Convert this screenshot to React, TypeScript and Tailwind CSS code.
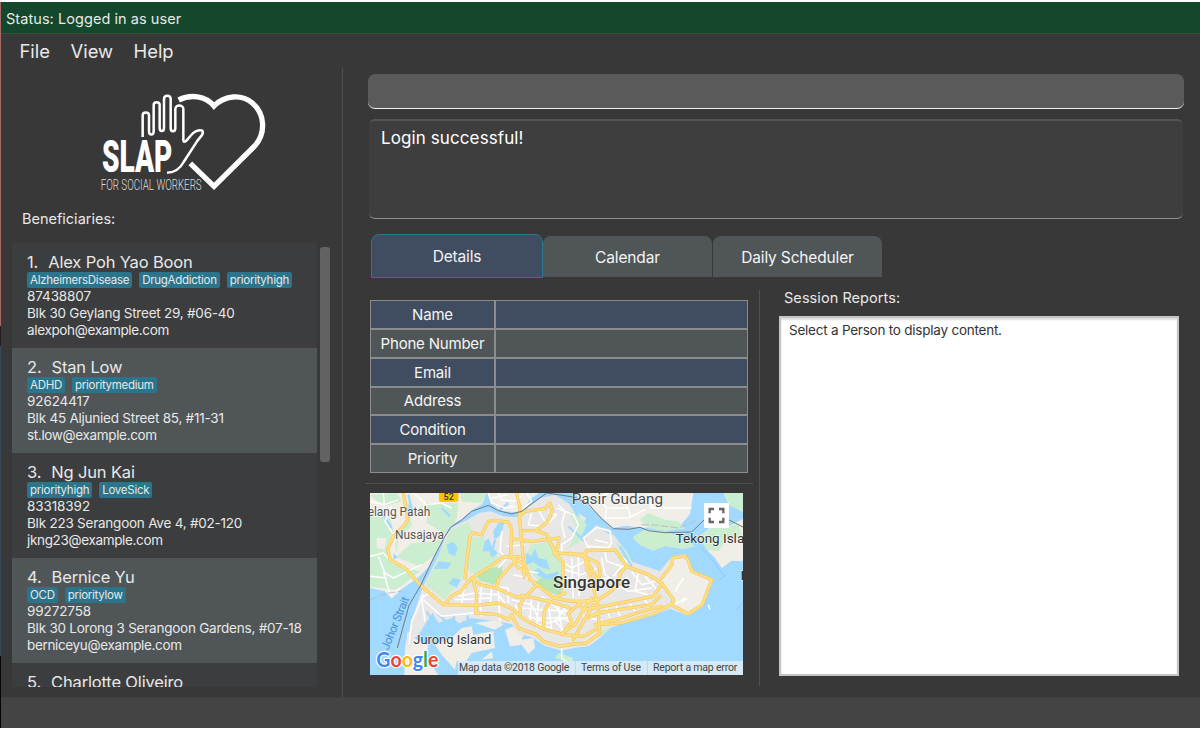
import React from "react";

type Person = { id: number; name: string; tags: string[]; phone: string; address: string; email: string };

const people: Person[] = [
  { id: 1, name: "Alex Poh Yao Boon", tags: ["AlzheimersDisease", "DrugAddiction", "priorityhigh"], phone: "87438807", address: "Blk 30 Geylang Street 29, #06-40", email: "alexpoh@example.com" },
  { id: 2, name: "Stan Low", tags: ["ADHD", "prioritymedium"], phone: "92624417", address: "Blk 45 Aljunied Street 85, #11-31", email: "st.low@example.com" },
  { id: 3, name: "Ng Jun Kai", tags: ["priorityhigh", "LoveSick"], phone: "83318392", address: "Blk 223 Serangoon Ave 4, #02-120", email: "jkng23@example.com" },
  { id: 4, name: "Bernice Yu", tags: ["OCD", "prioritylow"], phone: "99272758", address: "Blk 30 Lorong 3 Serangoon Gardens, #07-18", email: "berniceyu@example.com" },
  { id: 5, name: "Charlotte Oliveiro", tags: [], phone: "", address: "", email: "" },
];

const fields = ["Name", "Phone Number", "Email", "Address", "Condition", "Priority"];

function Logo() {
  return (
    <svg className="ml-[90px] mt-[17px] block h-[115px] w-[190px]" viewBox="0 0 570 345" fill="none" stroke="#fff">
      <path d="M266 45C302 27 346 32 372 63C404 30 455 27 487 54C527 88 527 146 494 183L372 304L301 235" strokeWidth="16" />
      <path
        d="M158 156V91C158 80 177 80 177 91V139C177 152 191 152 191 139V60C191 49 209 49 209 60V129C209 141 222 141 222 129V42C222 29 242 29 242 42V129C242 142 256 142 256 129V72C256 58 280 58 280 72V166C282 178 292 164 301 153C311 140 326 133 337 137C344 146 331 155 321 169L281 231C268 255 252 263 231 263"
        strokeWidth="7.5"
      />
      <g fill="#fff" stroke="none">
        <text x="36" y="262" fontFamily="Roboto, sans-serif" fontWeight="900" fontSize="134" textLength="211" lengthAdjust="spacingAndGlyphs">SLAP</text>
        <text x="32" y="314" fontFamily="Roboto, sans-serif" fontWeight="300" fontSize="46" textLength="303" lengthAdjust="spacingAndGlyphs" fill="#dedede">FOR SOCIAL WORKERS</text>
      </g>
    </svg>
  );
}

const highways = [
  "M115 15L122 55L128 95L118 112L85 145L68 185L76 216L120 240L165 290L235 350L330 352L400 345L440 362L480 395L540 425L600 440L655 445L700 420",
  "M240 348L262 322L285 312L318 272L370 240L415 207L475 205",
  "M300 272L305 220L315 145L322 135L350 140L370 100L385 97L430 102L440 125L437 200L455 235L480 250",
  "M455 15L465 60L463 85L475 215L495 275L530 300L565 330L620 340L675 340",
  "M463 85L480 70L540 62L555 45L562 70L545 105L515 125",
  "M440 152L500 160L582 150L578 178L568 198",
  "M475 128L515 128L545 140L570 195L660 200L665 188L750 186L785 235L850 260L890 285L925 335",
  "M320 270L345 290L395 300L455 328L482 325L515 292",
  "M470 322L555 340L615 360M440 210L475 225L478 268",
  "M440 230L400 275L395 300M325 280L335 320L333 375",
  "M333 375L400 380L430 395L440 380",
  "M440 380L460 420L515 440L535 460L585 475L625 468L665 465L705 435L700 410L770 405L870 375L920 348L925 335",
  "M890 270L920 232L922 210L955 204L968 214L980 250L1040 275L1012 350L970 378L922 352",
  "M660 195L665 240L680 275L690 320L700 355L702 420",
  "M785 235L765 255L765 285L735 312L700 335L650 342L610 375L620 400L590 440",
  "M480 325L465 350L465 385M555 340L538 370L535 420M565 330L600 315",
  "M570 195L595 225L592 300M615 195L655 205L700 225L705 260L690 290M655 200L700 280",
  "M640 345L655 365L700 358L780 342L865 325L890 290M670 390L700 375L760 365L860 350L885 325",
  "M600 430L630 410L660 360L680 330M625 455L650 410L685 350M690 410L770 390L830 370L890 355",
];

const streets = [
  "M15 205L55 195L85 225M40 205L60 255L85 270L170 230M55 250L75 320L105 300M15 265L65 270M145 15L180 45L165 90",
  "M15 40L60 50L100 35M55 15L58 55M180 50L230 45L260 60M80 55L60 100L85 140",
  "M370 15L380 45L420 60L450 55M400 15L410 35L445 40L470 25M485 15L500 40L470 65M380 30L430 20",
  "M175 320L140 400L132 470M175 335L230 385L325 375M180 400L170 330L200 310",
  "M280 325L330 315L400 320L420 345M300 290L290 345M350 290L345 345L350 385M380 300L375 350M400 310L405 400M270 335L380 330",
  "M410 130L405 190L425 210L400 240M425 175L480 170M440 215L465 245L520 255M445 260L490 270",
  "M500 75L490 110L530 115M520 65L545 110L575 80L550 75M580 50L600 70L590 110L600 150M575 60L625 80L640 110L620 150L590 170L590 200",
  "M670 180L655 150L695 118L735 130L740 165L720 190M690 155L730 165M670 175L740 180",
  "M590 220L620 240L660 220M600 245L650 260L700 240M600 270L660 280L730 270M620 210L625 330M640 200L642 325M710 210L720 260L750 280L790 270",
  "M720 190L725 220L770 235L745 265M765 205L785 220L770 245M800 250L830 290L870 280M820 255L810 310L850 320M840 265L880 310M755 290L790 310L860 300",
  "M440 335L500 350L520 390L600 390L620 410M500 330L495 400M520 340L515 420M550 345L560 425M580 350L590 430M470 360L530 365L610 370M490 385L550 405L620 385",
  "M530 325L600 380M450 350L480 400L560 420M605 355L570 400L600 430M645 350L660 390L710 395M720 350L735 390M750 345L765 385M790 340L810 370M835 330L850 350",
  "M930 310L955 270M965 330L950 345M930 350L960 330M1030 350L1035 365M380 295L430 300L430 345",
  "M700 30L725 60L720 90L790 90L840 65M730 60L790 60L795 85M760 30L790 60M850 20L860 60L980 60M710 25L730 15M590 475L590 510L610 525",
];

function SingaporeMap() {
  return (
    <svg className="block h-[182px] w-[373px]" viewBox="15 15 1119 546" preserveAspectRatio="none">
      <rect x="15" y="15" width="1119" height="546" fill="#a2daff" />
      <g fill="#f1ede7">
        <path d="M15 15H364L352 48L318 68L290 94L258 112L239 142L224 172L207 205L187 241L158 270L110 304L80 332L60 310L15 300Z" />
        <path d="M366 15H522L494 35L475 66L450 73L405 68L378 45Z" />
        <path d="M625 15L666 48L710 90L740 120L785 113L826 120L880 118L940 120L975 78L985 15Z" />
        <path d="M1010 140L1045 110L1080 120L1134 93V220L1100 218L1070 240L1050 210L1030 190Z" />
        <path d="M1075 15H1134V72L1090 50Z" fill="#c9eed2" />
        <path d="M128 430L150 452L190 472L185 510L220 561H118L120 485Z" />
        <path d="M210 470L260 450L290 420L320 415L325 440L385 430L390 480L320 495L300 525L275 520L270 545L230 500Z" />
        <path d="M420 425L460 410L480 430L470 455L505 450L510 480L490 498L470 470L435 475ZM330 405L400 395L415 410L390 425ZM350 515L380 490L385 510Z" />
      </g>
      <path
        d="M172 300L195 255L226 190L242 143L262 118L302 98L345 74L378 70L415 85L463 88L490 58L527 30L570 20L613 48L637 74L664 90L648 120L647 160L674 132L694 112L735 125L760 160L785 190L802 222L850 238L885 250L922 204L960 198L985 248L1045 278L1014 355L971 384L915 362L859 384L780 404L735 420L705 450L672 474L625 480L590 488L540 474L500 448L462 438L440 408L385 398L318 390L282 406L262 390L220 404L202 374L181 407L162 437L145 455L135 485L124 462L145 385Z"
        fill="#e9e7e6"
      />
      <path d="M888 270L922 210L958 204L980 250L1040 278L1012 350L972 378L922 348Z" fill="#f1ede7" />
      <g fill="#cbedd0">
        <path d="M130 85L185 45L280 45L275 95L235 145L210 200L165 235L100 210L90 170L100 140ZM15 85L75 90L85 130L65 175L85 228L165 250L95 305L15 296Z" />
        <path d="M182 290L230 185L255 130L310 102L325 140L300 200L295 265L240 335Z" />
        <path d="M320 150L355 145L380 190L400 210L375 240L335 260L305 245Z" />
        <path d="M500 170L560 160L590 205L600 260L590 320L555 310L520 275L495 250L480 205Z" />
        <path d="M825 95L850 75L900 95L940 100L960 122L900 128L850 120Z" />
        <path d="M802 148L840 124L900 130L950 148L990 175L955 184L900 175L865 188L825 172Z" />
        <path d="M1000 145L1050 112L1120 110L1134 150L1090 150L1060 190L1025 185Z" />
        <path d="M610 65L640 80L665 110L640 165L610 180L635 125ZM750 160L785 190L800 220L770 205ZM700 430L740 418L703 450ZM580 495L625 510L620 525L570 510Z" />
        <path d="M285 15L365 15L350 45L290 40ZM15 20L95 15L110 40L55 55Z" />
      </g>
      <g fill="#f1ede7">
        <path d="M130 60L190 70L185 105L230 130L215 160L140 165L95 205L100 150L140 115ZM35 150L65 150L60 185L35 180Z" />
      </g>
      <g fill="#b8e6b4">
        <path d="M335 265L375 240L412 235L410 265L388 290L345 278Z" />
        <path d="M500 290L540 262L585 270L595 320L565 318L530 298Z" />
      </g>
      <g fill="#a2daff">
        <path d="M245 170L265 162L278 180L270 205L250 195ZM205 243L222 220L260 225L248 242ZM360 160L370 150L380 175L398 195L385 208L372 190L352 190ZM385 130L400 105L418 105L408 140L388 155Z" />
        <path d="M482 195L500 205L510 180L520 210L545 215L555 245L525 238L505 222L484 232ZM505 250L520 240L545 260L580 250L580 270L545 275L518 262Z" />
        <path d="M265 270L288 275L275 300L250 285ZM130 45L145 65L130 95ZM85 195L100 208L85 215Z" />
      </g>
      <g stroke="#a2daff" strokeWidth="7" fill="none">
        <path d="M185 370L205 405M218 377L245 403M267 380V407M307 382L310 405M130 20L140 60M255 85L230 60M390 155L378 205M640 85L615 45M610 115L660 160M742 140L700 115M765 175L800 235M55 80L80 120M400 70L430 45" />
      </g>
      <g fill="none" stroke="#fff" strokeWidth="4.5" strokeLinejoin="round">
        {streets.map((d) => <path key={d} d={d} />)}
      </g>
      <g fill="none" stroke="#f4c95f" strokeWidth="10" strokeLinejoin="round" strokeLinecap="round">
        {highways.map((d) => <path key={d} d={d} />)}
      </g>
      <g fill="none" stroke="#ffe085" strokeWidth="6" strokeLinejoin="round" strokeLinecap="round">
        {highways.map((d) => <path key={d} d={d} />)}
      </g>
      <g fill="none" stroke="#737980" strokeWidth="3">
        <path d="M97 480L112 425L132 352L168 290L208 205L240 145L257 118L290 96L320 70L370 52L400 68L440 78L470 70L510 40L545 15" />
        <path d="M545 15L580 20L630 28L670 48L710 92L745 122L790 124L825 118L850 128L900 134L980 132L1018 95M1090 95L1134 117" />
      </g>
      <path d="M830 110L880 112L940 120L1000 95M15 335L60 318L110 308" fill="none" stroke="#b9bec3" strokeWidth="3" strokeDasharray="22 7" />
      <path d="M1010 180L1045 220L1080 265L1062 275M1112 365L1134 345" fill="none" stroke="#85c0f4" strokeWidth="2" />
      <path d="M222 10H280V34Q280 42 272 42H230Q222 42 222 34Z" fill="#f7c600" />
      <text x="251" y="35" textAnchor="middle" fontFamily="Roboto, sans-serif" fontWeight="500" fontSize="27" fill="#333">52</text>
      <g fontFamily="Roboto, sans-serif" fill="#4b4b4b" stroke="#fff" strokeOpacity="0.7" strokeWidth="4" strokeLinejoin="round" paintOrder="stroke">
        <text x="8" y="84" fontSize="37" textLength="188" lengthAdjust="spacingAndGlyphs" fill="#555">elang Patah</text>
        <text x="90" y="153" fontSize="36" textLength="147" lengthAdjust="spacingAndGlyphs" fill="#555">Nusajaya</text>
        <text x="620" y="47" fontSize="45" textLength="274" lengthAdjust="spacingAndGlyphs">Pasir Gudang</text>
        <text x="932" y="166" fontSize="39" textLength="228" lengthAdjust="spacingAndGlyphs" fill="#333">Tekong Islan</text>
        <text x="145" y="469" fontSize="40" textLength="234" lengthAdjust="spacingAndGlyphs" fill="#333">Jurong Island</text>
        <text x="564" y="299" fontSize="50" fontWeight="500" textLength="231" lengthAdjust="spacingAndGlyphs" fill="#333">Singapore</text>
        <text x="1127" y="275" fontSize="39" fontWeight="700" fill="#333">P</text>
      </g>
      <text transform="translate(70 488) rotate(-68)" fontFamily="Roboto, sans-serif" fontSize="35" textLength="168" fill="#4f92da">Johor Strait</text>
      <g fontFamily="Lato, sans-serif" fontWeight="700" fontSize="60" stroke="#fff" strokeWidth="7" paintOrder="stroke" strokeLinejoin="round">
        <text x="34" y="537" textLength="186" lengthAdjust="spacingAndGlyphs">
          <tspan fill="#4285f4">G</tspan><tspan fill="#ea4335">o</tspan><tspan fill="#fbbc05">o</tspan><tspan fill="#4285f4">g</tspan><tspan fill="#34a853">l</tspan><tspan fill="#ea4335">e</tspan>
        </text>
      </g>
      <rect x="1017" y="45" width="75" height="75" rx="3" fill="#fff" />
      <path d="M1034 76V63H1047M1062 63H1075V76M1075 89V102H1062M1047 102H1034V89" fill="none" stroke="#666" strokeWidth="7" />
    </svg>
  );
}

export default function App() {
  return (
    <div className="flex h-[730px] w-[1200px] flex-col overflow-hidden bg-white py-[2px] font-['Inter',sans-serif] text-[#e8e8e8]">
      <div className="flex min-h-0 flex-1">
        <div className="flex w-px flex-col">
          <div className="h-[324px] bg-[#a66a65]" />
          <div className="h-[20px] bg-[#2b1c20]" />
          <div className="h-[310px] bg-[#33485c]" />
          <div className="flex-1 bg-[#050505]" />
        </div>
        <div className="flex min-w-0 flex-1 flex-col bg-[#383838]">
          <header className="h-8 border-b border-[#3d4b42] bg-[#14482c] pl-[5px] text-[14.5px] leading-[34px] tracking-[0.06px]">Status: Logged in as user</header>
          <nav className="flex h-[34px] pl-[18.5px] text-[18.4px] leading-[35px]">
            <span className="w-[51px]">File</span><span className="w-[63px]">View</span><span>Help</span>
          </nav>
          <main className="flex h-[629px]">
            <aside className="flex w-[342px] flex-col border-r border-[#505050]">
              <div className="-ml-px h-[132px]"><Logo /></div>
              <h2 className="h-[43px] pl-[21px] pt-[9px] text-[14.5px] leading-5">Beneficiaries:</h2>
              <div className="flex pl-[11px]">
                <div className="h-[444px] w-[305px] overflow-hidden">
                  {people.map((p) => (
                    <article key={p.id} className="h-[105px] bg-[#3c3d3e] pl-[15px] pt-[9px] text-[13.5px] leading-[17px] even:bg-[#505658]">
                      <h3 className="flex h-5 gap-[10px] text-[16.5px] leading-[21px] tracking-[-0.16px]"><span>{p.id}.</span><span>{p.name}</span></h3>
                      <div className="flex h-4 gap-[7px]">
                        {p.tags.map((t) => <span key={t} className="rounded-[2px] bg-[#2a758c] px-[3px] text-[11.5px] leading-4 tracking-[-0.27px]">{t}</span>)}
                      </div>
                      <p className="tracking-[-0.1px]">{p.phone}</p>
                      <p className="tracking-[-0.23px]">{p.address}</p>
                      <p className="tracking-[-0.34px]">{p.email}</p>
                    </article>
                  ))}
                </div>
                <div className="ml-[3px] mt-1 h-[215px] w-[10px] rounded-[3px] bg-[#626262]" />
              </div>
            </aside>
            <section className="flex min-w-0 flex-1 flex-col pl-[25px] pt-[6px]">
              <div className="h-[35px] w-[816px] rounded-[7px] border-b border-[#efefef] bg-[#5a5a5a]" />
              <div className="ml-px mt-[10px] h-[100px] w-[814px] rounded-[6px] border-b border-t-2 border-b-[#919191] border-t-[#555] bg-[#3e3e3e] pl-3 pt-[6px] text-[17px] leading-[22px] tracking-[0.1px] text-white">Login successful!</div>
              <div className="ml-[3px] mt-[15px] flex h-11 items-end text-[15.5px] tracking-[-0.15px] text-[#f4f4f4]">
                <div className="h-11 w-[172px] rounded-t-[8px] border border-[#287891] bg-[#404d60] text-center leading-[43px]">Details</div>
                <div className="mb-px h-[41px] w-[169px] rounded-t-[8px] bg-[#505658] text-center leading-[43px]">Calendar</div>
                <div className="mb-px ml-px h-[41px] w-[169px] rounded-t-[8px] bg-[#505658] text-center leading-[43px]">Daily Scheduler</div>
              </div>
              <div className="-ml-[3px] flex">
                <div className="w-[388px]">
                  <div className="ml-[5px] mt-[22px] grid h-[173px] w-[378px] grid-rows-6 gap-[2px] border border-[#8c8c8c] bg-[#8c8c8c] text-[15px] tracking-[-0.2px] text-[#f4f4f4]">
                    {fields.map((f, i) => (
                      <div key={f} className="grid grid-cols-[123px_1fr] gap-[2px]">
                        <div className={`flex items-center justify-center pt-[1.5px] ${i % 2 ? "bg-[#505658]" : "bg-[#404d60]"}`}>{f}</div>
                        <div className={i % 2 ? "bg-[#505658]" : "bg-[#404d60]"} />
                      </div>
                    ))}
                  </div>
                  <div className="mt-[10px] h-px bg-[#505050]" />
                  <div className="relative ml-[5px] mt-[9px] h-[182px] w-[373px] overflow-hidden">
                    <SingaporeMap />
                    <div className="absolute bottom-0 right-0 flex h-[14px] w-[285px] bg-[#dcebf5]/90 font-['Roboto',sans-serif] text-[10.5px] leading-[14px] tracking-[-0.2px] text-[#444]">
                      <span className="w-[117px] pl-[1px]">Map data ©2018 Google</span>
                      <span className="w-[72px] border-l border-[#b9d9ee] pl-[5px]">Terms of Use</span>
                      <span className="flex-1 border-l border-[#b9d9ee] pl-[5px]">Report a map error</span>
                    </div>
                  </div>
                </div>
                <div className="ml-[6px] mt-3 h-[396px] w-px bg-[#505050]" />
                <div className="ml-[19px] w-[400px]">
                  <h2 className="h-[38px] pl-[5px] pt-[10px] text-[14.5px] leading-5 tracking-[0.06px]">Session Reports:</h2>
                  <div className="h-[360px] border-2 border-[#c4c4c4] bg-white pl-2 pt-[3px] text-[13.5px] leading-[18px] tracking-[-0.23px] text-[#333] shadow-[inset_0_2px_2px_#ddd]">Select a Person to display content.</div>
                </div>
              </div>
            </section>
          </main>
          <footer className="flex-1 border-t border-[#404040] bg-[#444]" />
        </div>
      </div>
    </div>
  );
}
